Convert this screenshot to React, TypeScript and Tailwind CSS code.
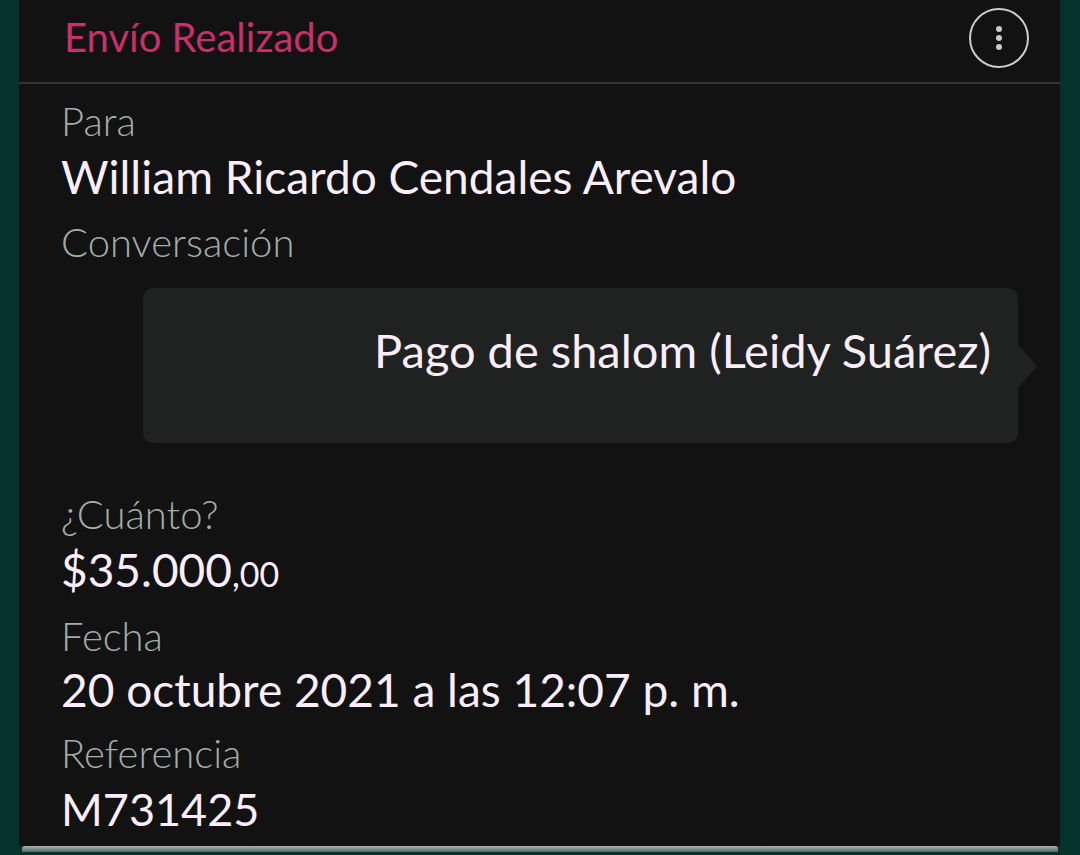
import React from "react";

const font = { fontFamily: "Lato, 'Noto Sans', sans-serif" };

function Label({ children }: { children: React.ReactNode }) {
  return (
    <div className="text-[40px] leading-[56px] text-[#a3adab] font-light">{children}</div>
  );
}

function Value({ children }: { children: React.ReactNode }) {
  return <div className="text-[46px] leading-[56px] text-[#fbeefa] font-normal">{children}</div>;
}

export default function App() {
  return (
    <div className="w-[1080px] h-[855px] bg-[#04332d] overflow-hidden" style={font}>
      <div className="ml-[19px] w-[1041px] h-[846px] bg-[#121212] flex flex-col">
        <div className="h-[84px] border-b-2 border-[#333535] flex items-center justify-between pl-[45px] pr-[31px]">
          <div className="text-[40px] text-[#c92f69] leading-none -mt-[8px]">Envío Realizado</div>
          <div className="w-[60px] h-[60px] rounded-full border-2 border-[#c9cccb] flex flex-col items-center justify-center gap-[3px] -mt-[6px]">
            <span className="w-[6px] h-[6px] rounded-full bg-[#c9cccb]" />
            <span className="w-[6px] h-[6px] rounded-full bg-[#c9cccb]" />
            <span className="w-[6px] h-[6px] rounded-full bg-[#c9cccb]" />
          </div>
        </div>
        <div className="pl-[42px] pr-[42px] pt-[9px] flex flex-col">
          <Label>Para</Label>
          <Value>William Ricardo Cendales Arevalo</Value>
          <div className="mt-[9px]">
            <Label>Conversación</Label>
          </div>
          <div className="relative mt-[18px] ml-[82px] w-[875px] h-[155px] bg-[#202222] rounded-[10px] flex items-start justify-end pr-[27px] pt-[34px]">
            <span className="text-[47px] leading-[56px] text-[#fbeefa]">Pago de shalom (Leidy Suárez)</span>
            <span className="absolute right-[-19px] top-[56px] w-0 h-0 border-y-[22px] border-y-transparent border-l-[19px] border-l-[#202222]" />
          </div>
          <div className="mt-[43px]">
            <Label>¿Cuánto?</Label>
          </div>
          <Value>
            $35.000<span className="text-[34px]">,00</span>
          </Value>
          <div className="mt-[6px]">
            <Label>Fecha</Label>
          </div>
          <div className="-mt-[2px]">
            <Value>20 octubre 2021 a las 12:07 p. m.</Value>
          </div>
          <div className="mt-[7px]">
            <Label>Referencia</Label>
          </div>
          <div className="text-[45px] leading-[56px] text-[#fbeefa]">M731425</div>
        </div>
      </div>
      <div className="ml-[22px] w-[1036px] h-[6px] rounded-t-[3px] bg-gradient-to-b from-[#aab6b3] to-[#4f6763]" />
    </div>
  );
}
